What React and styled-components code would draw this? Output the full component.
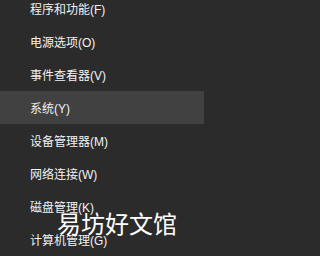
import React from 'react';
import styled, { createGlobalStyle } from 'styled-components';

const Global = createGlobalStyle`
  html, body {
    margin: 0;
    padding: 0;
    background: #2b2b2b;
    overflow: hidden;
  }
  body {
    width: 204px;
    height: 256px;
  }
`;

const Screen = styled.div`
  position: relative;
  width: 204px;
  height: 256px;
  overflow: hidden;
  background: #2b2b2b;
`;

const Menu = styled.ul`
  list-style: none;
  margin: -8px 0 0;
  padding: 0;
`;

const Item = styled.li`
  display: flex;
  align-items: center;
  height: 33px;
  padding-left: 30px;
  font-family: "Liberation Sans", "Noto Sans CJK SC", sans-serif;
  font-size: 12px;
  color: #f2f2f2;
  background: ${p => (p.$active ? '#414141' : 'transparent')};
`;

const Watermark = styled.div`
  position: absolute;
  left: 57px;
  top: 208px;
  font-family: "Noto Sans CJK SC", sans-serif;
  font-size: 24px;
  line-height: 30px;
  color: #ffffff;
  letter-spacing: 0;
`;

const items = [
  '程序和功能(F)',
  '电源选项(O)',
  '事件查看器(V)',
  '系统(Y)',
  '设备管理器(M)',
  '网络连接(W)',
  '磁盘管理(K)',
  '计算机管理(G)',
];

export default function App() {
  return (
    <Screen>
      <Global />
      <Menu>
        {items.map(label => (
          <Item key={label} $active={label === '系统(Y)'}>
            {label}
          </Item>
        ))}
      </Menu>
      <Watermark>易坊好文馆</Watermark>
    </Screen>
  );
}
